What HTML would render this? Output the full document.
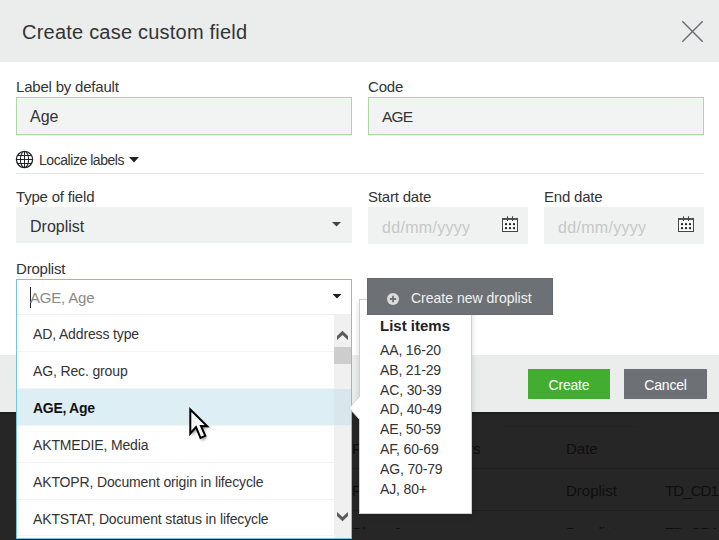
<!DOCTYPE html>
<html><head><meta charset="utf-8">
<style>
*{box-sizing:border-box;margin:0;padding:0}
html,body{width:719px;height:540px;overflow:hidden;background:#ffffff;font-family:"Liberation Sans",sans-serif;color:#333}
.abs{position:absolute}
#hdr{left:0;top:0;width:719px;height:62px;background:#ebecec}
#title{left:22px;top:20px;font-size:20px;letter-spacing:0.22px;color:#333;white-space:nowrap;line-height:24px}
.lbl{font-size:15px;letter-spacing:-0.2px;color:#333;white-space:nowrap;line-height:18px}
.inp{background:#f2f4f4;border:1px solid #aad9a3}
.txt{font-size:16px;color:#333;white-space:nowrap;line-height:18px}
.sel{background:#f0f2f2}
#footer{left:0;top:355px;width:719px;height:57px;background:#ebecec}
#dark{left:0;top:412px;width:719px;height:128px;background:#262626}
.btn{color:#fff;font-size:14px;letter-spacing:-0.2px;text-align:center;line-height:32px}
.row{left:17px;width:317px;height:37px;border-top:1px solid #f3f3f3;font-size:14px;letter-spacing:-0.14px;color:#333;padding-left:16px;line-height:38px;white-space:nowrap}
.li{position:absolute;font-size:14px;letter-spacing:-0.15px;color:#333;white-space:nowrap;left:380px;line-height:18px}
.dk{position:absolute;font-size:15px;color:#0f0f0f;white-space:nowrap;line-height:18px}
.dl{position:absolute;left:352px;width:367px;height:1px;background:#1f1f1f}
</style></head><body>
<div id="hdr" class="abs"></div>
<div id="title" class="abs">Create case custom field</div>
<svg class="abs" style="left:680px;top:19px" width="25" height="25" viewBox="0 0 25 25"><path d="M2.3 2.3 L22.7 22.7 M22.7 2.3 L2.3 22.7" stroke="#676b70" stroke-width="1.4" fill="none"/></svg>

<div class="abs lbl" style="left:16px;top:78px">Label by default</div>
<div class="abs inp" style="left:16px;top:97px;width:336px;height:38px"></div>
<div class="abs txt" style="left:30px;top:108px">Age</div>
<div class="abs lbl" style="left:368px;top:78px">Code</div>
<div class="abs inp" style="left:368px;top:97px;width:336px;height:38px"></div>
<div class="abs txt" style="left:382px;top:108px;font-size:15.5px;letter-spacing:-0.8px">AGE</div>

<svg class="abs" style="left:14px;top:149px" width="22" height="22" viewBox="0 0 22 22"><defs><clipPath id="gc"><circle cx="10.5" cy="10.5" r="8"/></clipPath></defs><g stroke="#1e2328" fill="none"><g clip-path="url(#gc)" stroke-width="1.05"><ellipse cx="10.5" cy="10.5" rx="4.1" ry="8.2"/><path d="M0 10.5H22M0 6.5H22M0 14.5H22M10.5 0V22"/></g><circle cx="10.5" cy="10.5" r="8.1" stroke-width="1.25"/></g></svg>
<div class="abs" style="left:39px;top:152px;font-size:14px;letter-spacing:-0.45px;color:#333;white-space:nowrap;line-height:16px">Localize labels</div>
<svg class="abs" style="left:129px;top:157px" width="10" height="6" viewBox="0 0 10 6"><path d="M0 0H10L5 5.5Z" fill="#222"/></svg>
<div class="abs" style="left:16px;top:173px;width:688px;height:1px;background:#e6e8e8"></div>

<div class="abs lbl" style="left:16px;top:188px">Type of field</div>
<div class="abs sel" style="left:16px;top:207px;width:336px;height:36px"></div>
<div class="abs txt" style="left:30px;top:218px">Droplist</div>
<svg class="abs" style="left:332px;top:222px" width="10" height="6" viewBox="0 0 10 6"><path d="M0 0H9L4.5 4.5Z" fill="#444"/></svg>

<div class="abs lbl" style="left:368px;top:188px">Start date</div>
<div class="abs sel" style="left:368px;top:207px;width:160px;height:37px"></div>
<div class="abs txt" style="left:382px;top:219px;color:#c6c8c8;letter-spacing:0.3px">dd/mm/yyyy</div>
<div class="abs lbl" style="left:544px;top:188px">End date</div>
<div class="abs sel" style="left:544px;top:207px;width:160px;height:37px"></div>
<div class="abs txt" style="left:558px;top:219px;color:#c6c8c8;letter-spacing:0.3px">dd/mm/yyyy</div>
<svg class="abs" style="left:500px;top:214px" width="20" height="20" viewBox="0 0 20 20"><rect x="2.5" y="4.5" width="15" height="13" fill="#f8f9f9"/><g fill="none" stroke="#41474c"><rect x="2.5" y="4.5" width="15" height="13" stroke-width="1"/><path d="M2.5 5.2H17.5" stroke-width="1.6" stroke="#50565b"/><path d="M7.5 2.3V7M12.5 2.3V7" stroke-width="1.1"/></g><g fill="#1f2326"><circle cx="6" cy="10.2" r="1.15"/><circle cx="10" cy="10.2" r="1.15"/><circle cx="14" cy="10.2" r="1.15"/><circle cx="6" cy="14.2" r="1.15"/><circle cx="10" cy="14.2" r="1.15"/><circle cx="14" cy="14.2" r="1.15"/></g></svg>
<svg class="abs" style="left:676px;top:214px" width="20" height="20" viewBox="0 0 20 20"><rect x="2.5" y="4.5" width="15" height="13" fill="#f8f9f9"/><g fill="none" stroke="#41474c"><rect x="2.5" y="4.5" width="15" height="13" stroke-width="1"/><path d="M2.5 5.2H17.5" stroke-width="1.6" stroke="#50565b"/><path d="M7.5 2.3V7M12.5 2.3V7" stroke-width="1.1"/></g><g fill="#1f2326"><circle cx="6" cy="10.2" r="1.15"/><circle cx="10" cy="10.2" r="1.15"/><circle cx="14" cy="10.2" r="1.15"/><circle cx="6" cy="14.2" r="1.15"/><circle cx="10" cy="14.2" r="1.15"/><circle cx="14" cy="14.2" r="1.15"/></g></svg>

<div class="abs lbl" style="left:16px;top:260px">Droplist</div>

<div id="footer" class="abs"></div>
<div id="dark" class="abs"></div>
<div class="abs" style="left:505px;top:426px;width:131px;height:1px;background:#222"></div><div class="abs" style="left:0;top:412px;width:719px;height:4px;background:linear-gradient(#1c1c1c,#262626)"></div>
<div class="dl" style="top:468px"></div>
<div class="dl" style="top:510px"></div>
<div class="dk" style="left:352px;top:440px">F</div><div class="dk" style="left:468px;top:440px">rs</div>
<div class="dk" style="left:566px;top:440px">Date</div>
<div class="dk" style="left:352px;top:482px">P</div>
<div class="dk" style="left:566px;top:482px">Droplist</div>
<div class="dk" style="left:665px;top:482px;letter-spacing:-0.9px">TD_CD1,</div>
<div class="dk" style="left:352px;top:524px">Place 2</div>
<div class="dk" style="left:566px;top:524px">Droplist</div>
<div class="dk" style="left:665px;top:524px;letter-spacing:-0.9px">TD_CD1,</div>
<div class="abs" style="left:0;top:529px;width:719px;height:11px;background:#262626"></div>

<div class="abs btn" style="left:528px;top:369px;width:82px;height:30px;background:#43ad32">Create</div>
<div class="abs btn" style="left:624px;top:369px;width:83px;height:30px;background:#6d7175">Cancel</div>

<!-- dropdown -->
<div class="abs" style="left:16px;top:279px;width:336px;height:260px;background:#fff;border:1px solid #74c4da"></div>
<div class="abs" style="left:30px;top:287px;width:1px;height:21px;background:#222"></div>
<div class="abs txt" style="left:30px;top:289px;color:#8a8a8a;font-size:15px;letter-spacing:-0.2px">AGE, Age</div>
<svg class="abs" style="left:332px;top:294px" width="10" height="6" viewBox="0 0 10 6"><path d="M0.5 0H9.5L5 4.5Z" fill="#1a1a1a"/></svg>

<div class="abs row" style="top:314px">AD, Address type</div>
<div class="abs row" style="top:351px">AG, Rec. group</div>
<div class="abs row" style="top:388px;background:#ddeef5;font-weight:bold;color:#111;letter-spacing:-0.3px">AGE, Age</div>
<div class="abs row" style="top:425px">AKTMEDIE, Media</div>
<div class="abs row" style="top:462px">AKTOPR, Document origin in lifecycle</div>
<div class="abs row" style="top:499px">AKTSTAT, Document status in lifecycle</div>
<div class="abs" style="left:17px;top:535px;width:317px;height:1px;background:#f3f3f3"></div>

<div class="abs" style="left:334px;top:314px;width:17px;height:224px;background:#f0f0f0"></div>
<div class="abs" style="left:334px;top:347px;width:17px;height:17px;background:#cdcdcd"></div>
<div class="abs" style="left:334px;top:389px;width:17px;height:36px;background:#d9e6eb"></div>
<svg class="abs" style="left:334px;top:326px" width="17" height="17" viewBox="0 0 17 17"><path d="M3 10 L8.5 4.8 L14 10 L14 14 L8.5 9 L3 14 Z" fill="#5a5a5a"/></svg>
<svg class="abs" style="left:334px;top:507px" width="17" height="17" viewBox="0 0 17 17"><path d="M3 5 L8.5 10 L14 5 L14 9 L8.5 14.2 L3 9 Z" fill="#5a5a5a"/></svg>

<!-- popover -->
<div class="abs" style="left:359px;top:299px;width:113px;height:215px;background:#fff;border:1px solid #d0d0d0;box-shadow:0 2px 6px rgba(0,0,0,0.15)"></div>
<svg class="abs" style="left:348px;top:396px" width="13" height="24" viewBox="0 0 13 24"><path d="M12 0 L1 12 L12 24 Z" fill="#fff"/><path d="M12 0 L1 12 L12 24" fill="none" stroke="#d0d0d0"/></svg>
<div class="abs" style="left:380px;top:317px;font-size:15px;font-weight:bold;color:#222;white-space:nowrap;line-height:18px">List items</div>
<div class="li" style="top:341px">AA, 16-20</div>
<div class="li" style="top:361px">AB, 21-29</div>
<div class="li" style="top:381px">AC, 30-39</div>
<div class="li" style="top:400px">AD, 40-49</div>
<div class="li" style="top:420px">AE, 50-59</div>
<div class="li" style="top:440px">AF, 60-69</div>
<div class="li" style="top:460px">AG, 70-79</div>
<div class="li" style="top:480px">AJ, 80+</div>

<!-- create new droplist -->
<div class="abs" style="left:367px;top:278px;width:186px;height:37px;background:#6d7175;border:1px solid #64696d"></div>
<svg class="abs" style="left:386px;top:292px" width="14" height="14" viewBox="0 0 14 14"><circle cx="7" cy="7" r="6" fill="#dcdcdc"/><path d="M7 3.8V10.2M3.8 7H10.2" stroke="#6d7175" stroke-width="1.8"/></svg>
<div class="abs" style="left:411px;top:289px;font-size:14px;color:#f2f2f2;white-space:nowrap;line-height:18px">Create new droplist</div>

<!-- cursor -->
<svg class="abs" style="left:184px;top:402px" width="34" height="46" viewBox="0 0 34 46"><defs><filter id="sh" x="-50%" y="-50%" width="200%" height="200%"><feGaussianBlur stdDeviation="1.6"/></filter></defs><path d="M6.3 7.5 L6.3 31.5 L12 25 L16.5 36 L21.3 33.8 L17 24 L23.3 24.3 Z" fill="#000" opacity="0.4" filter="url(#sh)" transform="translate(1.5,2.5)"/><path d="M6.3 7.5 L6.3 31.5 L12 25 L16.5 36 L21.3 33.8 L17 24 L23.3 24.3 Z" fill="#f8f8f8" stroke="#000" stroke-width="2" stroke-linejoin="miter"/></svg>

</body></html>
